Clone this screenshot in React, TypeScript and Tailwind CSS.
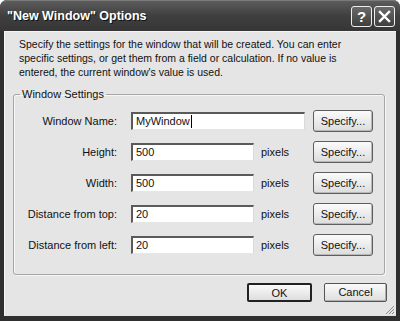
import React from "react";

const font = { fontFamily: '"Liberation Sans", Arial, sans-serif' };

function SpecifyButton() {
  return (
    <button className="ml-auto mr-[11px] h-[22px] w-[60px] rounded-[3px] border border-[#5e5e5e] bg-gradient-to-b from-[#fbfbfb] to-[#dcdcdc] text-[11px] text-[#111] shadow-[inset_-1px_-1px_0_#b8b8b8]">
      Specify...
    </button>
  );
}

function Row({ label, value, wide, cursor }: { label: string; value: string; wide?: boolean; cursor?: boolean }) {
  return (
    <div className="flex h-[31px] items-center">
      <div className="w-[103px] text-right text-[11px] text-[#111]">{label}</div>
      <div
        className={`ml-[14px] flex h-[18px] items-center border-t-[2px] border-l-[2px] border-r border-b border-t-[#5a5a5a] border-l-[#5a5a5a] border-r-[#dadada] border-b-[#e6e6e6] bg-white pl-[3px] text-[11px] text-[#111] ${
          wide ? "w-[174px]" : "w-[123px]"
        }`}
      >
        {value}
        {cursor && <span className="ml-[1px] inline-block h-[13px] w-[1px] bg-black" />}
      </div>
      {!wide && <div className="ml-[7px] text-[11px] text-[#111]">pixels</div>}
      <SpecifyButton />
    </div>
  );
}

export default function App() {
  return (
    <div className="h-[321px] w-[400px] bg-white" style={font}>
      <div className="flex h-[321px] w-[400px] flex-col rounded-t-[7px] bg-[#2f2f2f]">
        <div className="flex h-[31px] items-center rounded-t-[7px] border-t border-[#7a7a7a] bg-gradient-to-b from-[#5c5c5c] via-[#3f3f3f] to-[#363636] pl-[7px] pr-[5px]">
          <div className="text-[12.5px] font-bold text-white [text-shadow:1px_1px_0_#111]">"New Window" Options</div>
          <div className="ml-auto flex gap-[2px]">
            <div className="flex h-[21px] w-[21px] items-center justify-center rounded-[3px] border border-[#eeeeee] bg-gradient-to-b from-[#6a6a6a] to-[#3e3e3e] text-[15px] font-bold leading-none text-white">
              ?
            </div>
            <div className="flex h-[21px] w-[21px] items-center justify-center rounded-[3px] border border-[#eeeeee] bg-gradient-to-b from-[#6a6a6a] to-[#3e3e3e]">
              <svg width="13" height="13" viewBox="0 0 13 13">
                <path d="M2 2 L11 11 M11 2 L2 11" stroke="white" strokeWidth="2.4" strokeLinecap="square" />
              </svg>
            </div>
          </div>
        </div>
        <div className="relative mx-[4px] mb-[5px] flex flex-1 flex-col border-l border-t border-[#f4f4f4] bg-[#e5e5e5]">
          <p className="pl-[14px] pr-[20px] pt-[5px] text-[10.5px] leading-[14px] text-[#111]">
            Specify the settings for the window that will be created. You can enter specific settings, or get them from a field or calculation. If no value is entered, the current window's value is used.
          </p>
          <fieldset className="ml-[8px] mr-[11px] mt-[7px] rounded-[3px] border border-[#a6a6a6] pb-[13px] shadow-[inset_1px_1px_0_#f6f6f6,1px_1px_0_#f6f6f6]">
            <legend className="ml-[6px] px-[2px] text-[11px] text-[#111]">Window Settings</legend>
            <div className="mt-[3px]">
              <Row label="Window Name:" value="MyWindow" wide cursor />
              <Row label="Height:" value="500" />
              <Row label="Width:" value="500" />
              <Row label="Distance from top:" value="20" />
              <Row label="Distance from left:" value="20" />
            </div>
          </fieldset>
          <div className="mt-[8px] flex justify-end gap-[12px] pr-[9px]">
            <button className="h-[19px] w-[65px] rounded-[2px] border-2 border-[#222] bg-gradient-to-b from-[#fafafa] to-[#dedede] text-[11px] text-[#111]">
              OK
            </button>
            <button className="h-[19px] w-[63px] rounded-[2px] border border-[#555] bg-gradient-to-b from-[#fafafa] to-[#dedede] text-[11px] text-[#111] shadow-[inset_-1px_-1px_0_#b0b0b0]">
              Cancel
            </button>
          </div>
          <svg className="absolute bottom-[1px] right-[1px]" width="11" height="11" viewBox="0 0 11 11">
            <path d="M10 2 L2 10 M10 5 L5 10 M10 8 L8 10" stroke="#8a8a8a" strokeWidth="1" />
          </svg>
        </div>
      </div>
    </div>
  );
}
